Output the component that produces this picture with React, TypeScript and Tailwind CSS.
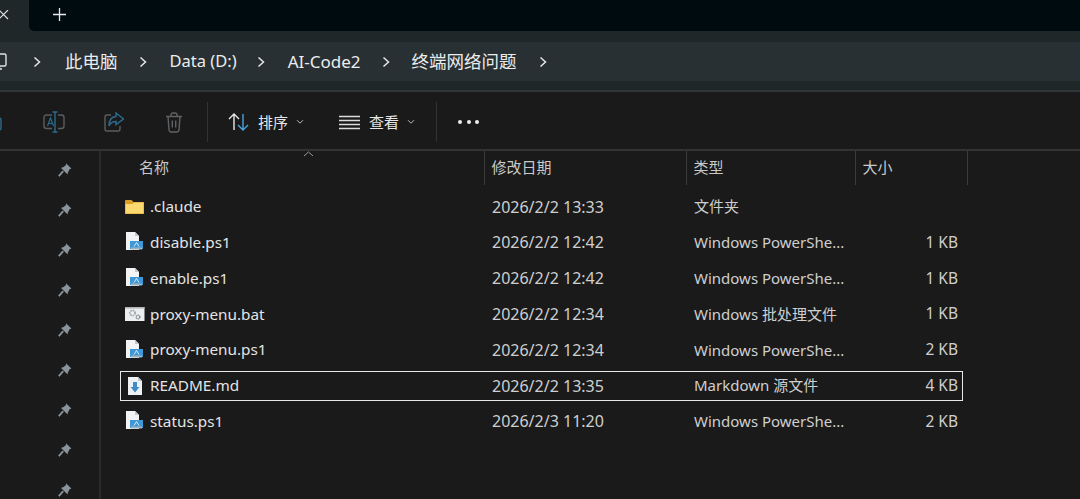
import React from "react";

const font = { fontFamily: '"Noto Sans","Noto Sans CJK SC",sans-serif' };

const Chevron = () => (
  <svg width="10" height="14" viewBox="0 0 10 14" fill="none" stroke="#e6e8e8" strokeWidth="1.5" className="shrink-0">
    <path d="M2.5 2.5 L7.5 7 L2.5 11.5" />
  </svg>
);

const Small = () => (
  <svg width="8" height="6" viewBox="0 0 8 6" fill="none" stroke="#b8b8b8" strokeWidth="1" className="shrink-0">
    <path d="M1 1.2 L4 4.2 L7 1.2" />
  </svg>
);

const Pin = () => (
  <svg width="14" height="14" viewBox="0 0 14 14" className="shrink-0">
    <path d="M8.2 0.6 L13.4 5.6 L11.6 6.2 L9.8 9.8 L9.6 11.4 L2.8 4.8 L4.6 4.4 L7.6 2.6 Z" fill="#8b949b" />
    <path d="M5.2 8.2 L0.8 13.2" stroke="#8b949b" strokeWidth="1.8" />
  </svg>
);

const Ps1 = () => (
  <svg width="19" height="20" viewBox="0 0 19 20" className="shrink-0">
    <path d="M1 0 H10 L14 4 V18 H1 Z" fill="#f1f3f5" />
    <path d="M10 0 V4 H14 Z" fill="#c2c8ce" />
    <rect x="5" y="9" width="13" height="8" fill="#3f97d6" />
    <rect x="6" y="15.5" width="11" height="2" fill="#a2b2bd" />
    <path d="M9 14.5 L11.5 10.5 L14 14.5" fill="none" stroke="#d6ebfa" strokeWidth="1" />
  </svg>
);

const Folder = () => (
  <svg width="20" height="16" viewBox="0 0 20 16" className="shrink-0">
    <path d="M0 2 Q0 1 1 1 H6.5 L8.5 3 H19 V15 H0 Z" fill="#d99f28" />
    <path d="M0.5 5 H7.5 L9 3.6 H18.5 V14.5 H0.5 Z" fill="#fbd970" />
  </svg>
);

const Bat = () => (
  <svg width="20" height="14" viewBox="0 0 20 14" className="shrink-0">
    <rect x="0" y="0" width="19.5" height="14" fill="#eceef0" />
    <rect x="0" y="0" width="19.5" height="1.6" fill="#b4b7ba" />
    <circle cx="7.5" cy="6" r="2.6" fill="none" stroke="#a3a8ad" strokeWidth="1.8" strokeDasharray="1.6 0.8" />
    <circle cx="13" cy="10" r="1.8" fill="none" stroke="#7c8388" strokeWidth="1.4" strokeDasharray="1.2 0.6" />
  </svg>
);

const Md = () => (
  <svg width="19" height="20" viewBox="0 0 19 20" className="shrink-0">
    <path d="M3 1 H13 L17 5 V19 H3 Z" fill="#eef2f5" />
    <path d="M13 1 V5 H17 Z" fill="#bfc6cc" />
    <path d="M8 6 H12 V11 H14.5 L10 16.5 L5.5 11 H8 Z" fill="#3f8cc6" />
  </svg>
);

const rows = [
  { icon: <Folder />, name: ".claude", date: "2026/2/2 13:33", type: "文件夹", size: "" },
  { icon: <Ps1 />, name: "disable.ps1", date: "2026/2/2 12:42", type: "Windows PowerShe...", size: "1 KB" },
  { icon: <Ps1 />, name: "enable.ps1", date: "2026/2/2 12:42", type: "Windows PowerShe...", size: "1 KB" },
  { icon: <Bat />, name: "proxy-menu.bat", date: "2026/2/2 12:34", type: "Windows 批处理文件", size: "1 KB" },
  { icon: <Ps1 />, name: "proxy-menu.ps1", date: "2026/2/2 12:34", type: "Windows PowerShe...", size: "2 KB" },
  { icon: <Md />, name: "README.md", date: "2026/2/2 13:35", type: "Markdown 源文件", size: "4 KB", selected: true },
  { icon: <Ps1 />, name: "status.ps1", date: "2026/2/3 11:20", type: "Windows PowerShe...", size: "2 KB" },
];

export default function App() {
  return (
    <div className="w-[1080px] h-[499px] overflow-hidden flex flex-col bg-[#1a1a1a] text-[#dedede]" style={font}>
      {/* tab strip */}
      <div className="h-[31px] flex bg-[#1f2729] shrink-0">
        <div className="w-[29px] flex items-center shrink-0">
          <svg width="10" height="10" viewBox="0 0 10 10" stroke="#e4e6e6" strokeWidth="1.1" className="ml-[-1px] mb-[2px]">
            <path d="M0 0 L9 9 M9 0 L0 9" />
          </svg>
        </div>
        <div className="flex-1 bg-[#000b10] rounded-bl-[5px] flex items-center pl-[24px]">
          <svg width="13" height="13" viewBox="0 0 13 13" stroke="#e8eaea" strokeWidth="1.3" className="mb-[2px]">
            <path d="M6.5 0 V13 M0 6.5 H13" />
          </svg>
        </div>
      </div>

      {/* address area */}
      <div className="h-[61px] shrink-0 bg-[#1f2729] border-b-2 border-[#333637] pt-[11px]">
        <div className="h-[39px] bg-[#293033] flex items-center text-[17.5px] text-[#ebeded] overflow-hidden">
          <svg width="16" height="20" viewBox="0 0 16 20" fill="none" stroke="#dfe2e2" strokeWidth="1.4" className="ml-[-7px] mr-[23px] shrink-0">
            <rect x="0" y="2" width="13" height="12" rx="1.5" />
            <path d="M6.5 14 V17 M3 17 H9" />
          </svg>
          <Chevron />
          <span className="ml-[23px] mr-[20px] whitespace-nowrap">此电脑</span>
          <Chevron />
          <span className="ml-[22px] mr-[19px] whitespace-nowrap text-[16.5px]">Data (D:)</span>
          <Chevron />
          <span className="ml-[22px] mr-[20px] whitespace-nowrap text-[17px]">AI-Code2</span>
          <Chevron />
          <span className="ml-[21px] mr-[21px] whitespace-nowrap">终端网络问题</span>
          <Chevron />
        </div>
      </div>

      {/* toolbar */}
      <div className="h-[59px] shrink-0 flex items-center border-b-2 border-[#333333] pt-[3px] text-[15px] text-[#e6e6e6]">
        <div className="ml-[-36px] w-[60px] flex justify-center shrink-0">
          <svg width="20" height="22" viewBox="0 0 20 22" fill="none" stroke="#2f6f96" strokeWidth="1.3">
            <rect x="3" y="7" width="14" height="12" rx="2" />
          </svg>
        </div>
        <div className="w-[60px] flex justify-center shrink-0">
          <svg width="22" height="22" viewBox="0 0 22 22" fill="none" strokeWidth="1.4">
            <path d="M9 4 H3.5 Q1 4 1 6.5 V15 Q1 17.5 3.5 17.5 H9 M15 4 H18.5 Q21 4 21 6.5 V15 Q21 17.5 18.5 17.5 H15" stroke="#5a5e60" />
            <path d="M12 1 V21 M9.5 1 H14.5 M9.5 21 H14.5" stroke="#2c6b90" />
            <path d="M4.5 15 L7.5 7 L10.5 15 M5.6 12.5 H9.4" stroke="#2c6b90" strokeWidth="1.2" />
          </svg>
        </div>
        <div className="w-[60px] flex justify-center shrink-0">
          <svg width="20" height="20" viewBox="0 0 20 20" fill="none" strokeWidth="1.4">
            <path d="M7 3 H3 Q1 3 1 5 V17 Q1 19 3 19 H14 Q16 19 16 17 V14" stroke="#5a5e60" />
            <path d="M12 1 L19.5 7 L12 12.5 V9.5 Q7 9.5 5 14 Q5 5 12 4.5 Z" stroke="#2c6b90" />
          </svg>
        </div>
        <div className="w-[60px] flex justify-center shrink-0">
          <svg width="18" height="21" viewBox="0 0 18 21" fill="none" stroke="#5f6264" strokeWidth="1.4">
            <path d="M1 4.5 H17 M6 4.5 V3 Q6 1 8 1 H10 Q12 1 12 3 V4.5 M3 4.5 L4 18 Q4.2 20 6 20 H12 Q13.8 20 14 18 L15 4.5 M7.3 8.5 V15.5 M10.7 8.5 V15.5" />
          </svg>
        </div>
        <div className="ml-[3px] w-px h-[40px] bg-[#333333] shrink-0" />
        <div className="ml-[20px] shrink-0 flex">
          <svg width="21" height="20" viewBox="0 0 21 20" fill="none" strokeWidth="1.4">
            <path d="M6 18 V2 M1 7 L6 2 L11 7" stroke="#e8e8e8" />
            <path d="M15 2 V18 M10 13 L15 18 L20 13" stroke="#4aa3df" />
          </svg>
        </div>
        <span className="ml-[9px] whitespace-nowrap">排序</span>
        <div className="ml-[8px]"><Small /></div>
        <div className="ml-[35px] shrink-0">
          <svg width="21" height="15" viewBox="0 0 21 15" stroke="#dcdcdc" strokeWidth="1.3">
            <path d="M0 1.5 H21 M0 5.5 H21 M0 9.5 H21 M0 13.5 H21" />
          </svg>
        </div>
        <span className="ml-[9px] whitespace-nowrap">查看</span>
        <div className="ml-[8px]"><Small /></div>
        <div className="ml-[21px] w-px h-[40px] bg-[#333333] shrink-0" />
        <div className="ml-[21px] flex gap-[4.5px] shrink-0">
          <span className="w-[4px] h-[4px] rounded-full bg-[#ececec]" />
          <span className="w-[4px] h-[4px] rounded-full bg-[#ececec]" />
          <span className="w-[4px] h-[4px] rounded-full bg-[#ececec]" />
        </div>
      </div>

      {/* body */}
      <div className="flex flex-1 min-h-0">
        <div className="w-[101px] shrink-0 border-r-2 border-[#2b2b2b] flex flex-col items-end pr-[27px] pt-[12px] gap-[26px] overflow-hidden">
          {Array.from({ length: 9 }).map((_, i) => (
            <Pin key={i} />
          ))}
        </div>
        <div className="flex-1 min-w-0 flex flex-col">
          <div className="relative h-[34px] shrink-0 flex text-[15px] text-[#c9c9c9]">
            <svg width="11" height="6" viewBox="0 0 11 6" fill="none" stroke="#9a9a9a" strokeWidth="1" className="absolute left-[202px] top-[0px]">
              <path d="M1 5 L5.5 1 L10 5" />
            </svg>
            <div className="w-[383.5px] pl-[38px] flex items-center pb-[2px] border-r border-[#3c3c3c]">名称</div>
            <div className="w-[202px] pl-[7px] flex items-center pb-[2px] border-r border-[#3c3c3c]">修改日期</div>
            <div className="w-[169px] pl-[7px] flex items-center pb-[2px] border-r border-[#3c3c3c]">类型</div>
            <div className="w-[112px] pl-[7px] flex items-center pb-[2px] border-r border-[#3c3c3c]">大小</div>
          </div>
          <div className="flex flex-col gap-[5.83px] pt-[6.5px] pl-[19px]">
            {rows.map((r) => (
              <div
                key={r.name}
                className={`w-[843px] h-[30px] flex items-center text-[15.3px] border ${r.selected ? "border-[#e8e8e8]" : "border-transparent"}`}
              >
                <div className="w-[29px] pl-[4px] flex justify-start shrink-0">{r.icon}</div>
                <div className="w-[342px] shrink-0 whitespace-nowrap text-[#e4e4e4]">{r.name}</div>
                <div className="w-[202px] shrink-0 whitespace-nowrap text-[#cfcfcf] text-[16px]">{r.date}</div>
                <div className="w-[160px] shrink-0 whitespace-nowrap text-[#cfcfcf] text-[15px]">{r.type}</div>
                <div className="w-[104px] shrink-0 text-right whitespace-nowrap text-[#cfcfcf] text-[15.5px]">{r.size}</div>
              </div>
            ))}
          </div>
        </div>
      </div>
    </div>
  );
}
